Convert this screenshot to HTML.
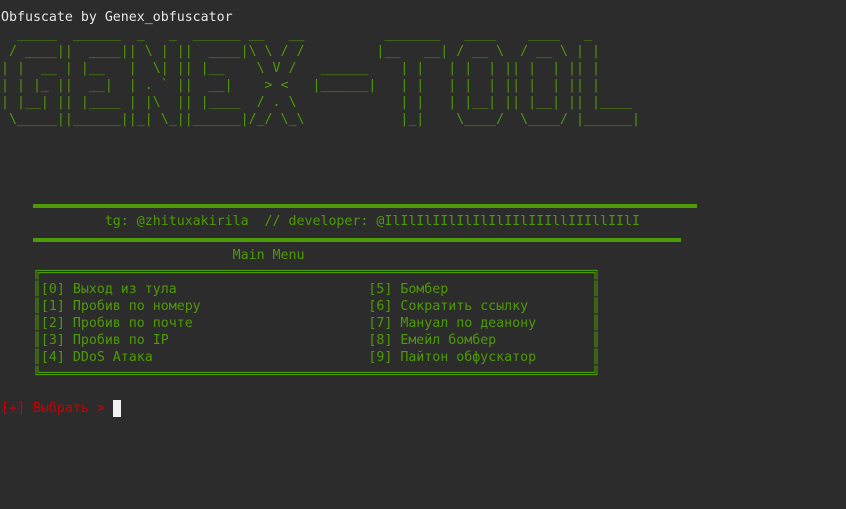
<!DOCTYPE html>
<html><head><meta charset="utf-8">
<style>
html,body{margin:0;padding:0;background:#2c2c2c;width:846px;height:509px;overflow:hidden}
pre{margin:0;position:absolute;left:1px;top:9px;font-family:"DejaVu Sans Mono","Liberation Mono",monospace;font-size:13.28px;line-height:17px;color:#4e9a06;white-space:pre}
.w{color:#e6e6e6}
.r{color:#cc0000}
.cur{display:inline-block;width:8px;height:17px;background:#f2f2f2;vertical-align:top}
.rule{position:absolute;left:33px;height:4px;background:#4e9a06}
</style></head><body>
<div class="rule" style="top:204px;width:664px"></div>
<div class="rule" style="top:238px;width:648px"></div>
<pre><span class="w">Obfuscate by Genex_obfuscator</span>
  _____  ______  _   _  ______ __   __          _______   ____    ____   _
 / ____||  ____|| \ | ||  ____|\ \ / /         |__   __| / __ \  / __ \ | |
| |  __ | |__   |  \| || |__    \ V /   ______    | |   | |  | || |  | || |
| | |_ ||  __|  | . ` ||  __|    > <   |______|   | |   | |  | || |  | || |
| |__| || |____ | |\  || |____  / . \             | |   | |__| || |__| || |____
 \_____||______||_| \_||______|/_/ \_\            |_|    \____/  \____/ |______|





             tg: @zhituxakirila  // developer: @IlIlIlIIlIlIlIlIIlIIIllIIIllIIlI

                             Main Menu
    ╔═════════════════════════════════════════════════════════════════════╗
    ║[0] Выход из тула                        [5] Бомбер                  ║
    ║[1] Пробив по номеру                     [6] Сократить ссылку        ║
    ║[2] Пробив по почте                      [7] Мануал по деанону       ║
    ║[3] Пробив по IP                         [8] Емейл бомбер            ║
    ║[4] DDoS Атака                           [9] Пайтон обфускатор       ║
    ╚═════════════════════════════════════════════════════════════════════╝

<span class="r">[+] Выбрать &gt; </span><span class="cur"></span></pre>
</body></html>
